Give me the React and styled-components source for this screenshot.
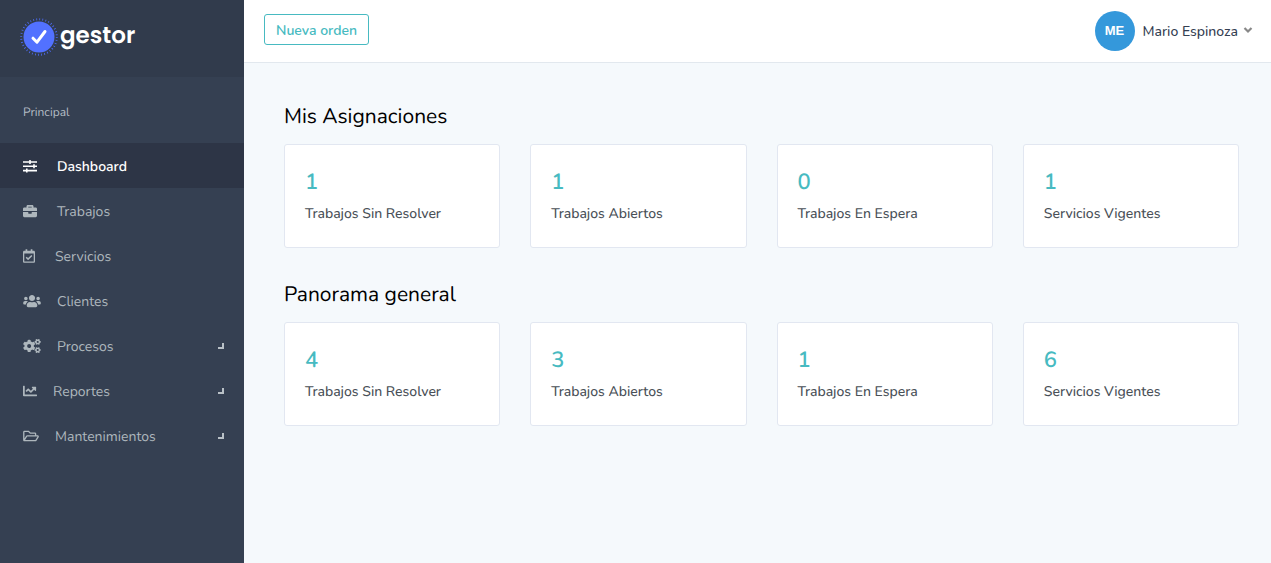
import React, { Fragment } from 'react';
import styled, { createGlobalStyle } from 'styled-components';
import { FaBriefcase, FaCogs, FaUsers, FaChartLine, FaRegCalendarCheck, FaRegFolderOpen } from 'react-icons/fa';

const GlobalStyle = createGlobalStyle`
    * {
        box-sizing: border-box;
    }

    body {
        margin: 0;
        background: #f5f9fc;
        font-family: Nunito, Lato, "Noto Sans", sans-serif;
        font-size: 14px;
        text-rendering: geometricPrecision;
    }
`

const Layout = styled.div`
    display: flex;
    min-height: 100vh;
`

const Sidebar = styled.aside`
    flex: 0 0 244px;
    background: #354052;
`

const Brand = styled.a`
    display: flex;
    align-items: center;
    height: 77px;
    padding: 0 20px 4px;
    background: #313b4c;
    color: #fff;
    font-family: Poppins, Inter, sans-serif;
    font-size: 23px;
    font-weight: 600;
    line-height: 32px;
    text-decoration: none;
`

const BrandIcon = styled.svg`
    width: 38px;
    height: 38px;
    margin-right: 2px;
`

const BrandName = styled.span`
    padding-bottom: 2px;
`

const MenuTitle = styled.p`
    margin: 0;
    padding: 25px 23px 19px;
    color: #b3bcc4;
    font-size: 12px;
    line-height: 22px;
`

const Menu = styled.ul`
    margin: 0;
    padding: 0;
    list-style: none;
`

const MenuLink = styled.a`
    display: flex;
    align-items: center;
    height: 45px;
    padding: 2px 20px 0 23px;
    background: ${props => props.$active ? '#2d3546' : 'transparent'};
    color: ${props => props.$active ? '#fff' : '#aeb7bd'};
    font-weight: ${props => props.$active ? 600 : 400};
    text-decoration: none;
`

const MenuIcon = styled.span`
    display: flex;
    flex: none;
    padding-bottom: 2px;
    margin-right: ${props => props.$gap}px;

    svg {
        width: ${props => props.$width}px;
        height: 14px;
    }
`

const Arrow = styled.span`
    width: 6px;
    height: 6px;
    margin: 0 0 2px auto;
    border: solid #b9c1c7;
    border-width: 0 2px 2px 0;
`

const Main = styled.main`
    flex: 1;
    min-width: 0;
`

const TopBar = styled.header`
    display: flex;
    align-items: flex-start;
    justify-content: space-between;
    height: 63px;
    padding: 11px 18px 0 20px;
    background: #fff;
    border-bottom: 1px solid #e2e8ee;
`

const OrderButton = styled.button`
    height: 31px;
    margin-top: 3px;
    padding: 1px 11px 0;
    background: #fff;
    border: 1px solid #47bac1;
    border-radius: 3px;
    color: #47bac1;
    font: inherit;
    font-weight: 600;
    cursor: pointer;
`

const UserButton = styled.button`
    display: flex;
    align-items: center;
    padding: 0;
    background: none;
    border: 0;
    color: #354052;
    font: inherit;
    font-weight: 500;
    cursor: pointer;
`

const Avatar = styled.span`
    width: 40px;
    height: 40px;
    margin-right: 8px;
    border-radius: 50%;
    background: #3498db;
    color: #fff;
    font-family: "Liberation Sans", Arial, sans-serif;
    font-size: 13px;
    font-weight: 700;
    line-height: 40px;
    text-align: center;
`

const Caret = styled.svg`
    width: 10px;
    height: 10px;
    margin-left: 5px;
`

const Content = styled.div`
    padding: 40px 32px 0 40px;
`

const SectionTitle = styled.h2`
    margin: 0 0 12px;
    color: #000;
    font-size: 21px;
    font-weight: 400;
    line-height: 29px;
`

const CardGrid = styled.div`
    display: grid;
    grid-template-columns: repeat(4, 1fr);
    gap: 30px;
    margin-bottom: 33px;
`

const Card = styled.div`
    padding: 20px 20px 18px;
    background: #fff;
    border: 1px solid #e2e7f1;
    border-radius: 3px;
`

const CardValue = styled.div`
    color: #47bac1;
    font-size: 22px;
    font-weight: 600;
    line-height: 34px;
`

const CardLabel = styled.div`
    color: #495057;
    font-weight: 500;
    line-height: 30px;
`

const SlidersIcon = () => (
    <svg viewBox="0 0 14 14" fill="#fff">
        <path d="M0 2.2h14v1.6H0zM0 6.4h14V8H0zM0 10.8h14v1.6H0zM6.2 1h1.6v4H6.2zM10.2 5.2h1.6v4h-1.6zM3 9.6h1.6v4H3z" />
    </svg>
)

const menuItems = [
    { name: 'Dashboard', icon: <SlidersIcon />, width: 14, gap: 20, active: true },
    { name: 'Trabajos', icon: <FaBriefcase />, width: 14, gap: 20 },
    { name: 'Servicios', icon: <FaRegCalendarCheck />, width: 12, gap: 20 },
    { name: 'Clientes', icon: <FaUsers />, width: 18, gap: 16 },
    { name: 'Procesos', icon: <FaCogs />, width: 18, gap: 16, children: true },
    { name: 'Reportes', icon: <FaChartLine />, width: 14, gap: 16, children: true },
    { name: 'Mantenimientos', icon: <FaRegFolderOpen />, width: 16, gap: 16, children: true },
]

const sections = [
    { title: 'Mis Asignaciones', values: [1, 1, 0, 1] },
    { title: 'Panorama general', values: [4, 3, 1, 6] },
]

const labels = ['Trabajos Sin Resolver', 'Trabajos Abiertos', 'Trabajos En Espera', 'Servicios Vigentes'];

export default function App() {
    return (
        <Layout>
            <GlobalStyle />
            <Sidebar>
                <Brand href="#">
                    <BrandIcon viewBox="0 0 38 38">
                        <circle cx="19" cy="19" r="17.8" fill="none" stroke="#4e6cf5" strokeWidth="2" strokeDasharray="0.8 2.3" />
                        <circle cx="19" cy="19" r="15.5" fill="#5271ff" />
                        <path d="M13 20.2l4 4L25 13.5" fill="none" stroke="#fff" strokeWidth="3" strokeLinecap="round" strokeLinejoin="round" />
                    </BrandIcon>
                    <BrandName>gestor</BrandName>
                </Brand>
                <MenuTitle>Principal</MenuTitle>
                <Menu>
                    {menuItems.map(item => (
                        <li key={item.name}>
                            <MenuLink href="#" $active={item.active}>
                                <MenuIcon $width={item.width} $gap={item.gap}>{item.icon}</MenuIcon>
                                {item.name}
                                {item.children && <Arrow />}
                            </MenuLink>
                        </li>
                    ))}
                </Menu>
            </Sidebar>

            <Main>
                <TopBar>
                    <OrderButton>Nueva orden</OrderButton>
                    <UserButton>
                        <Avatar>ME</Avatar>
                        Mario Espinoza
                        <Caret viewBox="0 0 10 10">
                            <path d="M1.5 2L5 5.5L8.5 2" fill="none" stroke="#888" strokeWidth="2.2" />
                        </Caret>
                    </UserButton>
                </TopBar>
                <Content>
                    {sections.map(section => (
                        <Fragment key={section.title}>
                            <SectionTitle>{section.title}</SectionTitle>
                            <CardGrid>
                                {labels.map((label, i) => (
                                    <Card key={label}>
                                        <CardValue>{section.values[i]}</CardValue>
                                        <CardLabel>{label}</CardLabel>
                                    </Card>
                                ))}
                            </CardGrid>
                        </Fragment>
                    ))}
                </Content>
            </Main>
        </Layout>
    );
}
